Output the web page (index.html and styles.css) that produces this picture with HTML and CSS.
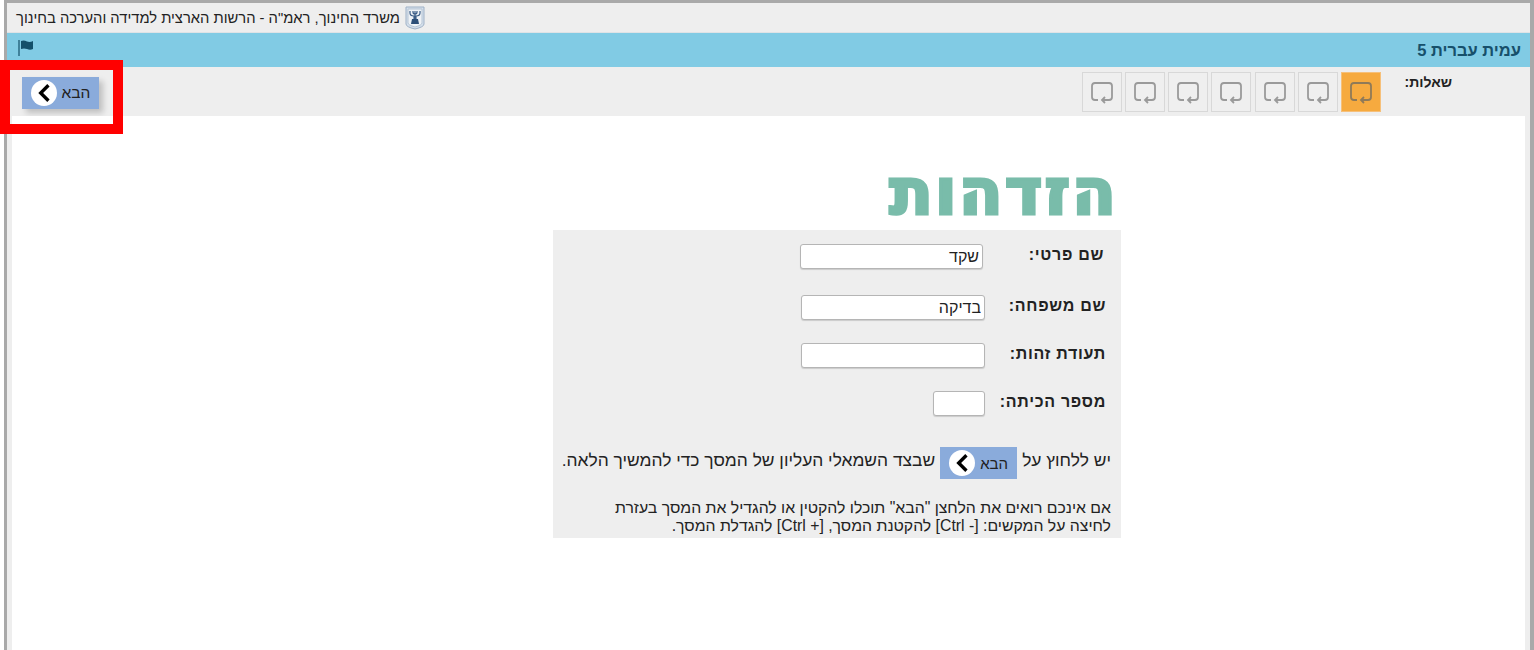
FILE: index.html
```html
<!DOCTYPE html>
<html lang="he" dir="rtl">
<head>
    <meta charset="UTF-8">
    <meta name="viewport" content="width=device-width, initial-scale=1.0">
    <title>הזדהות</title>
    <link rel="stylesheet" href="styles.css">
</head>
<body>
    <div class="frame">
        <header class="top-bar">
            <svg class="emblem" viewBox="0 0 20 24" width="20" height="24">
                <path d="M1 1 H19 V18 Q19 21 10 23 Q1 21 1 18 Z" fill="#d5e0ec" stroke="#9fb1c6"/>
                <path d="M3 3 H17 V17 Q17 19 10 21 Q3 19 3 17 Z" fill="#eef2f6" stroke="#b7c5d5"/>
                <path d="M5 5 V7 Q5 10 9 10 V13 M15 5 V7 Q15 10 11 10 V13 M8 5 V6 Q8 8 10 8 Q12 8 12 6 V5 M10 5 V13" fill="none" stroke="#3a5c86" stroke-width="1.2"/>
                <path d="M6 18 L7 13 H13 L14 18 Z" fill="#2d4f78"/>
            </svg>
            <span>משרד החינוך, ראמ"ה - הרשות הארצית למדידה והערכה בחינוך</span>
        </header>

        <div class="title-bar">
            <span class="title-text">עמית עברית 5</span>
            <svg class="flag" viewBox="0 0 16 18" width="16" height="18">
                <path d="M1 1 V17" stroke="#14506a" stroke-width="1.2"/>
                <path d="M3 2 Q6 1 9 2.5 Q12 3.5 15 2 V10 Q12 11.5 9 10 Q6 9 3 10 Z" fill="#14506a"/>
            </svg>
        </div>

        <div class="tool-bar">
            <div class="questions-label">שאלות:</div>
            <div class="questions">
                <div class="question current">
                    <svg viewBox="0 0 24 23" width="24" height="23"><path d="M8 19 H5 Q2 19 2 16 V5 Q2 2 5 2 H19 Q22 2 22 5 V16 Q22 19 19 19 H12 M15 16 L12 19 L15 22"/></svg>
                </div>
                <div class="question">
                    <svg viewBox="0 0 24 23" width="24" height="23"><path d="M8 19 H5 Q2 19 2 16 V5 Q2 2 5 2 H19 Q22 2 22 5 V16 Q22 19 19 19 H12 M15 16 L12 19 L15 22"/></svg>
                </div>
                <div class="question">
                    <svg viewBox="0 0 24 23" width="24" height="23"><path d="M8 19 H5 Q2 19 2 16 V5 Q2 2 5 2 H19 Q22 2 22 5 V16 Q22 19 19 19 H12 M15 16 L12 19 L15 22"/></svg>
                </div>
                <div class="question">
                    <svg viewBox="0 0 24 23" width="24" height="23"><path d="M8 19 H5 Q2 19 2 16 V5 Q2 2 5 2 H19 Q22 2 22 5 V16 Q22 19 19 19 H12 M15 16 L12 19 L15 22"/></svg>
                </div>
                <div class="question">
                    <svg viewBox="0 0 24 23" width="24" height="23"><path d="M8 19 H5 Q2 19 2 16 V5 Q2 2 5 2 H19 Q22 2 22 5 V16 Q22 19 19 19 H12 M15 16 L12 19 L15 22"/></svg>
                </div>
                <div class="question">
                    <svg viewBox="0 0 24 23" width="24" height="23"><path d="M8 19 H5 Q2 19 2 16 V5 Q2 2 5 2 H19 Q22 2 22 5 V16 Q22 19 19 19 H12 M15 16 L12 19 L15 22"/></svg>
                </div>
                <div class="question">
                    <svg viewBox="0 0 24 23" width="24" height="23"><path d="M8 19 H5 Q2 19 2 16 V5 Q2 2 5 2 H19 Q22 2 22 5 V16 Q22 19 19 19 H12 M15 16 L12 19 L15 22"/></svg>
                </div>
            </div>
            <button class="next-btn raised">
                <span>הבא</span>
                <span class="next-circle"><svg viewBox="0 0 14 18" width="16" height="20"><path d="M11 2 L4 9 L11 16"/></svg></span>
            </button>
        </div>

        <main class="content">
            <div class="login">
                <h1>הזדהות</h1>
                <div class="panel">
                    <div class="form-row first">
                        <label>שם פרטי:</label>
                        <input class="field" type="text" value="שקד">
                    </div>
                    <div class="form-row second">
                        <label>שם משפחה:</label>
                        <input class="field wide" type="text" value="בדיקה">
                    </div>
                    <div class="form-row third">
                        <label>תעודת זהות:</label>
                        <input class="field wide" type="text">
                    </div>
                    <div class="form-row fourth">
                        <label>מספר הכיתה:</label>
                        <input class="field small" type="text">
                    </div>
                    <div class="press-line">
                        <span>יש ללחוץ על</span>
                        <span class="next-btn inline">
                            <span>הבא</span>
                            <span class="next-circle"><svg viewBox="0 0 14 18" width="16" height="20"><path d="M11 2 L4 9 L11 16"/></svg></span>
                        </span>
                        <span>שבצד השמאלי העליון של המסך כדי להמשיך הלאה.</span>
                    </div>
                    <p class="zoom-note">אם אינכם רואים את הלחצן "הבא" תוכלו להקטין או להגדיל את המסך בעזרת<br>לחיצה על המקשים: [- Ctrl] להקטנת המסך, [+ Ctrl] להגדלת המסך.</p>
                </div>
            </div>
        </main>
    </div>

    <div class="highlight"></div>
</body>
</html>
```

FILE: styles.css
```css
html, body {
    margin: 0;
    height: 100%;
    overflow: hidden;
}

body {
    font-family: "Liberation Sans", Arial, sans-serif;
    color: #222;
    background: white;
}

.frame {
    height: 100%;
    box-sizing: border-box;
    margin-left: 4px;
    background: #eeeeee;
    border-top: 3px solid #a9a9a9;
    border-left: 3px solid #a9a9a9;
    border-right: 4px solid #a9a9a9;
    display: flex;
    flex-direction: column;
}

.top-bar {
    height: 29px;
    display: flex;
    align-items: center;
    justify-content: flex-end;
    gap: 5px;
    padding-left: 9px;
    font-size: 14.75px;
    background: #eeeeee;
    border-bottom: 1px solid #dfe3e6;
}

.top-bar span {
    order: 1;
}

.emblem {
    order: 0;
}

.title-bar {
    height: 34px;
    background: #81cbe4;
    display: flex;
    align-items: center;
    justify-content: space-between;
    padding: 0 9px 0 11px;
}

.title-text {
    font-size: 16.5px;
    font-weight: bold;
    color: #17506b;
    margin-top: 1px;
}

.flag {
    margin-top: -4px;
}

.tool-bar {
    height: 49px;
    display: flex;
    align-items: flex-start;
    padding: 5px 78px 0 15px;
    box-sizing: border-box;
}

.questions-label {
    font-size: 14px;
    font-weight: bold;
    margin-top: 2px;
    width: 48px;
    color: #222;
}

.questions {
    display: flex;
    gap: 3.2px;
    margin-right: 23px;
}

.question {
    width: 38px;
    height: 38px;
    border: 1px solid #d8d8d8;
    background: #efefef;
    display: flex;
    align-items: center;
    justify-content: center;
}

.question svg {
    fill: none;
    stroke: #9a9a9a;
    stroke-width: 1.8;
}

.question.current {
    background: #f6aa3f;
    border-color: #f6c07a;
}

.question.current svg {
    stroke: #8f7a58;
}

.next-btn {
    display: flex;
    align-items: center;
    justify-content: center;
    gap: 5px;
    background: #8aabdb;
    border: none;
    font-family: inherit;
    color: #222;
}

.next-btn.raised {
    width: 77px;
    height: 32px;
    margin-right: auto;
    margin-top: 5px;
    padding: 0;
    font-size: 15.5px;
    box-shadow: 4px 4px 6px rgba(0, 0, 0, 0.2);
}

.next-btn.inline {
    display: inline-flex;
    width: 77px;
    height: 32px;
    font-size: 15px;
    margin: 0 5px;
}

.next-circle {
    width: 26px;
    height: 26px;
    border-radius: 50%;
    background: white;
    display: flex;
    align-items: center;
    justify-content: center;
}

.next-circle svg {
    fill: none;
    stroke: black;
    stroke-width: 3;
}

.content {
    flex: 1;
    background: white;
    margin: 0 5px;
    display: flex;
    padding-right: 404px;
}

.login {
    width: 568px;
}

h1 {
    margin: 40px 0 0;
    height: 74px;
    padding-right: 3px;
    font-family: "DejaVu Sans", sans-serif;
    font-size: 64px;
    line-height: 72px;
    letter-spacing: 2px;
    font-weight: bold;
    color: #79bcaa;
    -webkit-text-stroke: 3px #79bcaa;
    white-space: nowrap;
}

.panel {
    background: #eeeeee;
    height: 308px;
    box-sizing: border-box;
    padding-top: 14px;
}

.form-row {
    display: flex;
    align-items: center;
    height: 25px;
    margin-bottom: 23px;
    padding-right: 15px;
}

.form-row.first {
    margin-bottom: 26px;
    padding-right: 17px;
}

.form-row label {
    width: 121px;
    margin-top: -4px;
    font-size: 16px;
    letter-spacing: 0.7px;
    font-weight: bold;
    color: #222;
}

.field {
    width: 183px;
    height: 25px;
    box-sizing: border-box;
    border: 1px solid #b5b5b5;
    border-radius: 3px;
    background: white;
    padding: 0 3px;
    font-family: inherit;
    font-size: 16px;
    color: #222;
    box-shadow: 0 1px 1px rgba(0, 0, 0, 0.15);
}

.field.wide {
    width: 184px;
}

.field.small {
    width: 52px;
}

.press-line {
    display: flex;
    align-items: center;
    height: 32px;
    margin-top: 31px;
    padding-right: 10px;
    font-size: 17.4px;
    color: #222;
}

.press-line > span:not(.next-btn) {
    margin-top: -5px;
}

.zoom-note {
    margin: 20px 10px 0 0;
    font-size: 15.8px;
    line-height: 18px;
    color: #222;
}

.highlight {
    position: absolute;
    left: 0;
    top: 60px;
    width: 103px;
    height: 54px;
    border: 10px solid #ff0000;
}
```
